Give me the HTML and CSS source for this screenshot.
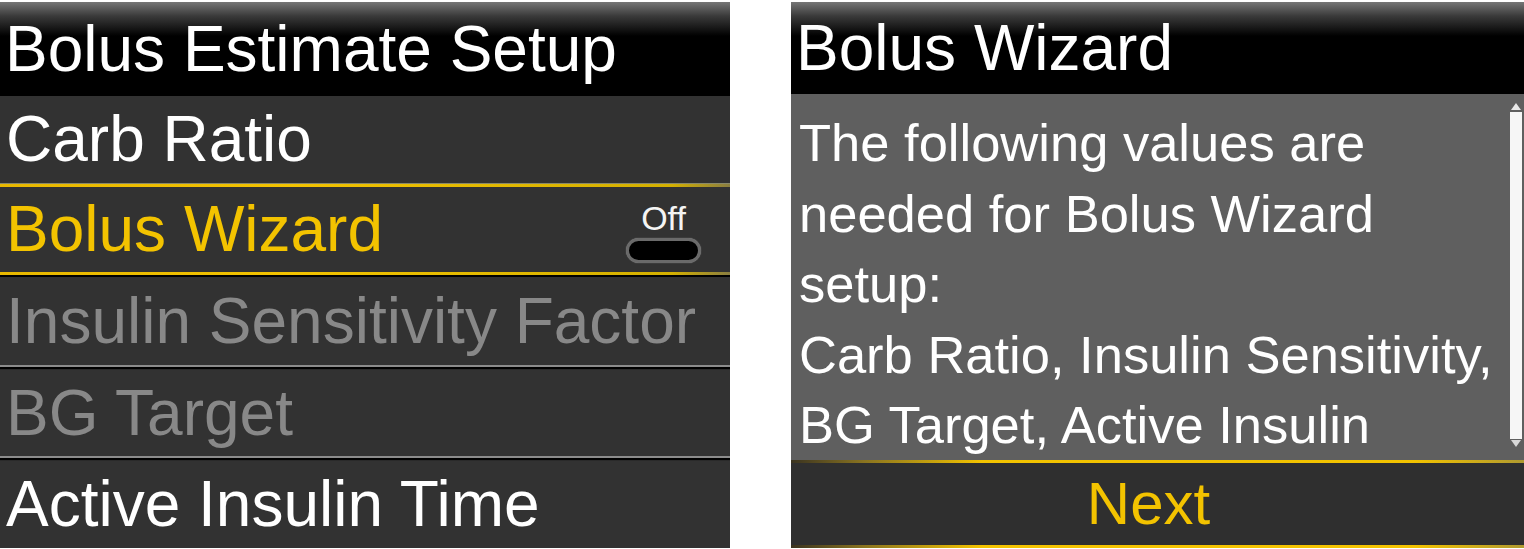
FILE: index.html
```html
<!DOCTYPE html>
<html lang="en">
<head>
<meta charset="utf-8">
<title>Bolus Estimate Setup</title>
<link rel="stylesheet" href="styles.css">
</head>
<body>
<div class="screens">
  <section class="panel panel-left">
    <header class="title">Bolus Estimate Setup</header>
    <div class="row row-1">Carb Ratio</div>
    <div class="sep sep-sel-top"></div>
    <div class="row row-sel">
      <span class="label">Bolus Wizard</span>
      <span class="toggle">
        <span class="toggle-text">Off</span>
        <span class="toggle-pill"></span>
      </span>
    </div>
    <div class="sep sep-sel-bottom"></div>
    <div class="row row-3 dim">Insulin Sensitivity Factor</div>
    <div class="sep sep-grey"></div>
    <div class="row row-4 dim">BG Target</div>
    <div class="sep sep-grey"></div>
    <div class="row row-5">Active Insulin Time</div>
  </section>

  <section class="panel panel-right">
    <header class="title">Bolus Wizard</header>
    <div class="body">
      <p class="message">The following values are needed for Bolus Wizard setup:<br>Carb Ratio, Insulin Sensitivity, BG Target, Active Insulin</p>
      <div class="scrollbar">
        <span class="arrow arrow-up"></span>
        <span class="thumb"></span>
        <span class="arrow arrow-down"></span>
      </div>
    </div>
    <div class="line-yellow"></div>
    <div class="footer">Next</div>
    <div class="line-yellow"></div>
  </section>
</div>
</body>
</html>
```

FILE: styles.css
```css
html, body {
  margin: 0;
  padding: 0;
  background: #ffffff;
}

body {
  font-family: "Liberation Sans", Arial, sans-serif;
  width: 1524px;
  height: 549px;
  overflow: hidden;
}

.screens {
  display: flex;
  gap: 61px;
  padding-top: 2px;
}

.panel {
  display: flex;
  flex-direction: column;
}

.panel-left {
  width: 730px;
  background: #323232;
  height: 546px;
}

.panel-right {
  flex: 1;
  height: 546px;
}

.title {
  background: linear-gradient(#767676 0, #3a3a3a 14px, #000 34px, #000 100%);
  color: #ffffff;
  font-size: 64px;
  line-height: 94px;
  height: 94px;
  padding-left: 5px;
  white-space: nowrap;
}

.panel-right .title {
  height: 92px;
  line-height: 92px;
  padding-left: 5px;
}

.row {
  height: 87px;
  line-height: 87px;
  font-size: 64px;
  color: #ffffff;
  padding-left: 6px;
  background: #323232;
  white-space: nowrap;
}

.row.dim {
  color: #888888;
}

.row-3 { height: 88px; line-height: 88px; }
.row-4 { height: 86px; line-height: 86px; }

.row-sel {
  height: 85px;
  line-height: 85px;
  display: flex;
  justify-content: space-between;
  align-items: center;
  color: #f3c300;
  padding-right: 29px;
}

.toggle {
  display: flex;
  flex-direction: column;
  align-items: center;
  line-height: 1;
  margin-top: 4px;
}

.toggle-text {
  font-size: 34px;
  color: #f4f4f4;
  line-height: 34px;
}

.toggle-pill {
  display: block;
  width: 69px;
  height: 19px;
  background: #000;
  border: 3px solid #6a6a6a;
  border-radius: 13px;
  box-shadow: 0 0 1px #999;
  margin-top: 3px;
}

.sep {
  flex: none;
}

.sep-sel-top {
  height: 4px;
  border-top: 1px solid #8a8a6a;
  box-sizing: border-box;
  background: linear-gradient(90deg, #e8b800 0, #f3c300 40%, #d4b000 92%, #8a7e40 100%);
}

.sep-sel-bottom {
  height: 5px;
  background:
    linear-gradient(#000, #000) bottom / 100% 2px no-repeat,
    linear-gradient(90deg, #e8b800 0, #f3c300 40%, #d4b000 92%, #8a7e40 100%);
}

.sep-grey {
  height: 5px;
  background: linear-gradient(#8c8c8c 0, #8c8c8c 2px, #000 2px, #000 4px, #2a2a2a 4px);
}

/* right panel */
.body {
  height: 366px;
  background: #5f5f5f;
  display: flex;
  justify-content: space-between;
}

.message {
  margin: 0;
  padding: 14px 0 0 8px;
  font-size: 52.5px;
  line-height: 70.5px;
  color: #ffffff;
  width: 700px;
}

.scrollbar {
  width: 12px;
  margin-right: 2px;
  display: flex;
  flex-direction: column;
  align-items: center;
  padding-top: 9px;
}

.arrow {
  width: 0;
  height: 0;
  border-left: 5px solid transparent;
  border-right: 5px solid transparent;
}

.arrow-up {
  border-bottom: 7px solid #e8e8e8;
}

.arrow-down {
  border-top: 7px solid #d8d8d8;
  margin-top: 1px;
}

.thumb {
  display: block;
  width: 12px;
  height: 327px;
  background: #f6f6f6;
  margin-top: 2px;
}

.line-yellow {
  height: 3px;
  background: linear-gradient(90deg, #3a3320 0, #8a7420 10%, #f3c300 26%, #f3c300 85%, #b09a30 100%);
}

.footer {
  height: 82px;
  line-height: 82px;
  background: #2f2f2f;
  color: #f3c300;
  font-size: 60px;
  text-align: center;
  padding-right: 18px;
}
```
